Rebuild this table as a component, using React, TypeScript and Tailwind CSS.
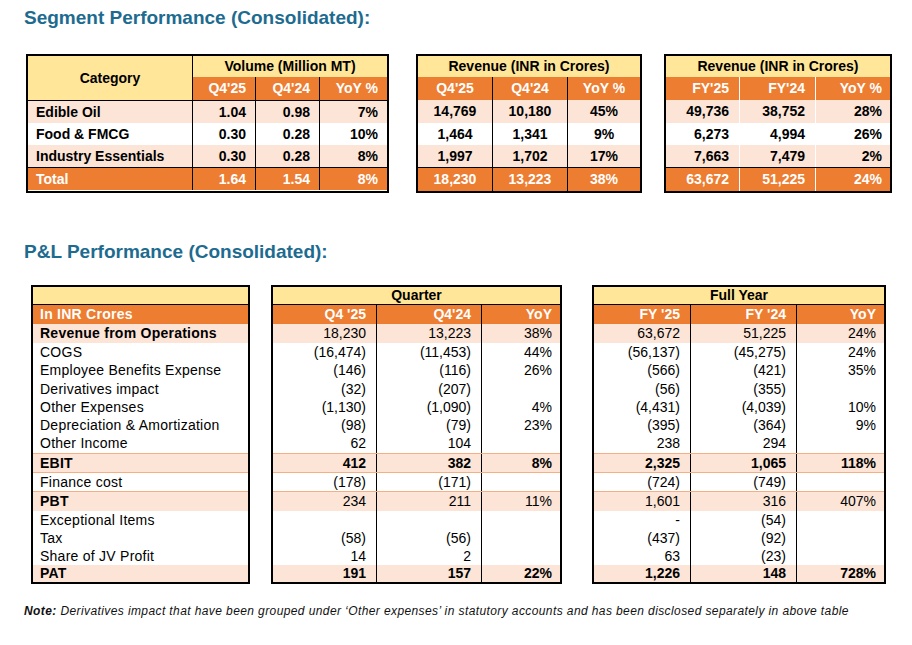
import React from "react";

const YEL = "bg-[#ffe699]";
const ORG = "bg-[#ed7d31]";
const PCH = "bg-[#fce4d6]";

type SegRow = { label: string; a: string[]; b: string[]; c: string[]; bg: string; h: string; h2: string };

const segRows: SegRow[] = [
  { label: "Edible Oil", a: ["1.04", "0.98", "7%"], b: ["14,769", "10,180", "45%"], c: ["49,736", "38,752", "28%"], bg: PCH, h: "h-[23px] border-t border-black", h2: "h-[23px]" },
  { label: "Food & FMCG", a: ["0.30", "0.28", "10%"], b: ["1,464", "1,341", "9%"], c: ["6,273", "4,994", "26%"], bg: "bg-white", h: "h-[22px]", h2: "h-[22px]" },
  { label: "Industry Essentials", a: ["0.30", "0.28", "8%"], b: ["1,997", "1,702", "17%"], c: ["7,663", "7,479", "2%"], bg: PCH, h: "h-[22px]", h2: "h-[22px]" },
];

const total = { a: ["1.64", "1.54", "8%"], b: ["18,230", "13,223", "38%"], c: ["63,672", "51,225", "24%"] };

type PL = { label: string; q: string[]; f: string[]; bg: string; h: string; boldLabel?: boolean; boldVal?: boolean };

const pl: PL[] = [
  { label: "Revenue from Operations", q: ["18,230", "13,223", "38%"], f: ["63,672", "51,225", "24%"], bg: PCH, h: "h-[19px]", boldLabel: true },
  { label: "COGS", q: ["(16,474)", "(11,453)", "44%"], f: ["(56,137)", "(45,275)", "24%"], bg: "bg-white", h: "h-[18px]" },
  { label: "Employee Benefits Expense", q: ["(146)", "(116)", "26%"], f: ["(566)", "(421)", "35%"], bg: "bg-white", h: "h-[19px]" },
  { label: "Derivatives impact", q: ["(32)", "(207)", ""], f: ["(56)", "(355)", ""], bg: "bg-white", h: "h-[18px]" },
  { label: "Other Expenses", q: ["(1,130)", "(1,090)", "4%"], f: ["(4,431)", "(4,039)", "10%"], bg: "bg-white", h: "h-[18px]" },
  { label: "Depreciation & Amortization", q: ["(98)", "(79)", "23%"], f: ["(395)", "(364)", "9%"], bg: "bg-white", h: "h-[18px]" },
  { label: "Other Income", q: ["62", "104", ""], f: ["238", "294", ""], bg: "bg-white", h: "h-[19px]" },
  { label: "EBIT", q: ["412", "382", "8%"], f: ["2,325", "1,065", "118%"], bg: PCH, h: "h-[20px] border-y border-[#f4b084]", boldLabel: true, boldVal: true },
  { label: "Finance cost", q: ["(178)", "(171)", ""], f: ["(724)", "(749)", ""], bg: "bg-white", h: "h-[18px]" },
  { label: "PBT", q: ["234", "211", "11%"], f: ["1,601", "316", "407%"], bg: PCH, h: "h-[20px] border-t border-[#f4b084]", boldLabel: true },
  { label: "Exceptional Items", q: ["", "", ""], f: ["-", "(54)", ""], bg: "bg-white", h: "h-[18px]" },
  { label: "Tax", q: ["(58)", "(56)", ""], f: ["(437)", "(92)", ""], bg: "bg-white", h: "h-[18px]" },
  { label: "Share of JV Profit", q: ["14", "2", ""], f: ["63", "(23)", ""], bg: "bg-white", h: "h-[18px]" },
  { label: "PAT", q: ["191", "157", "22%"], f: ["1,226", "148", "728%"], bg: PCH, h: "h-[17px]", boldLabel: true, boldVal: true },
];

function SegTable1() {
  return (
    <div className="border-2 border-black w-[363px] text-[14px] font-bold">
      <div className="grid grid-cols-[164px_63px_64px_68px] grid-rows-[21px_23px]">
        <div className={`${YEL} row-span-2 flex items-center justify-center`}>Category</div>
        <div className={`${YEL} col-span-3 border-l border-black flex items-center justify-center`}>Volume (Million MT)</div>
        <div className={`${ORG} border-l border-black text-white flex items-center justify-end pr-[9px]`}>Q4'25</div>
        <div className={`${ORG} border-l border-black text-white flex items-center justify-end pr-[9px]`}>Q4'24</div>
        <div className={`${ORG} border-l border-black text-white flex items-center justify-end pr-[9px]`}>YoY %</div>
      </div>
      {segRows.map((r) => (
        <div key={r.label} className={`flex ${r.bg} ${r.h}`}>
          <div className="w-[164px] flex items-center pl-[8px]">{r.label}</div>
          <div className="w-[63px] border-l border-black flex items-center justify-end pr-[9px]">{r.a[0]}</div>
          <div className="w-[64px] border-l border-black flex items-center justify-end pr-[9px]">{r.a[1]}</div>
          <div className="w-[68px] border-l border-black flex items-center justify-end pr-[9px]">{r.a[2]}</div>
        </div>
      ))}
      <div className={`flex ${ORG} h-[23px] border-t border-black text-white`}>
        <div className="w-[164px] flex items-center pl-[8px]">Total</div>
        <div className="w-[63px] border-l border-black flex items-center justify-end pr-[9px]">{total.a[0]}</div>
        <div className="w-[64px] border-l border-black flex items-center justify-end pr-[9px]">{total.a[1]}</div>
        <div className="w-[68px] border-l border-black flex items-center justify-end pr-[9px]">{total.a[2]}</div>
      </div>
    </div>
  );
}

function SegTable2() {
  return (
    <div className="border-2 border-black w-[226px] text-[14px] font-bold">
      <div className={`${YEL} h-[21px] flex items-center justify-center`}>Revenue (INR in Crores)</div>
      <div className={`flex ${ORG} h-[23px] text-white`}>
        <div className="w-[74px] flex items-center justify-center">Q4'25</div>
        <div className="w-[75px] border-l border-black flex items-center justify-center">Q4'24</div>
        <div className="w-[73px] border-l border-black flex items-center justify-center">YoY %</div>
      </div>
      {segRows.map((r) => (
        <div key={r.label} className={`flex ${r.bg} ${r.h2}`}>
          <div className="w-[74px] flex items-center justify-center">{r.b[0]}</div>
          <div className="w-[75px] border-l border-black flex items-center justify-center">{r.b[1]}</div>
          <div className="w-[73px] border-l border-black flex items-center justify-center">{r.b[2]}</div>
        </div>
      ))}
      <div className={`flex ${ORG} h-[24px] border-t border-black text-white`}>
        <div className="w-[74px] flex items-center justify-center">{total.b[0]}</div>
        <div className="w-[75px] border-l border-black flex items-center justify-center">{total.b[1]}</div>
        <div className="w-[73px] border-l border-black flex items-center justify-center">{total.b[2]}</div>
      </div>
    </div>
  );
}

function SegTable3() {
  return (
    <div className="border-2 border-black w-[228px] text-[14px] font-bold">
      <div className={`${YEL} h-[21px] flex items-center justify-center`}>Revenue (INR in Crores)</div>
      <div className={`flex ${ORG} h-[23px] text-white`}>
        <div className="w-[73px] flex items-center justify-end pr-[10px]">FY'25</div>
        <div className="w-[76px] border-l border-white flex items-center justify-end pr-[10px]">FY'24</div>
        <div className="w-[75px] border-l border-white flex items-center justify-end pr-[8px]">YoY %</div>
      </div>
      {segRows.map((r) => (
        <div key={r.label} className={`flex ${r.bg} ${r.h2}`}>
          <div className="w-[73px] flex items-center justify-end pr-[10px]">{r.c[0]}</div>
          <div className="w-[76px] border-l border-white flex items-center justify-end pr-[10px]">{r.c[1]}</div>
          <div className="w-[75px] border-l border-white flex items-center justify-end pr-[8px]">{r.c[2]}</div>
        </div>
      ))}
      <div className={`flex ${ORG} h-[24px] border-t border-black text-white`}>
        <div className="w-[73px] flex items-center justify-end pr-[10px]">{total.c[0]}</div>
        <div className="w-[76px] border-l border-white flex items-center justify-end pr-[10px]">{total.c[1]}</div>
        <div className="w-[75px] border-l border-white flex items-center justify-end pr-[8px]">{total.c[2]}</div>
      </div>
    </div>
  );
}

function PLLabels() {
  return (
    <div className="border-2 border-black w-[219px] text-[14px] tracking-[0.25px]">
      <div className={`${YEL} h-[17px]`}></div>
      <div className={`${ORG} h-[20px] border-t border-black text-white font-bold flex items-center pl-[7px]`}>In INR Crores</div>
      {pl.map((r) => (
        <div key={r.label} className={`${r.bg} ${r.h} flex items-center pl-[7px] ${r.boldLabel ? "font-bold" : ""}`}>{r.label}</div>
      ))}
    </div>
  );
}

function PLValues({ title, heads, widths, pads, pick }: { title: string; heads: string[]; widths: string[]; pads: string[]; pick: (r: PL) => string[] }) {
  return (
    <div className="border-2 border-black text-[14px]">
      <div className={`${YEL} h-[17px] flex items-center justify-center font-bold`}>{title}</div>
      <div className={`flex ${ORG} h-[20px] border-t border-black text-white font-bold`}>
        {heads.map((h, i) => (
          <div key={h} className={`${widths[i]} ${pads[i]} ${i > 0 ? "border-l border-black" : ""} flex items-center justify-end`}>{h}</div>
        ))}
      </div>
      {pl.map((r) => (
        <div key={r.label} className={`flex ${r.bg} ${r.h} ${r.boldVal ? "font-bold" : ""}`}>
          {pick(r).map((v, i) => (
            <div key={i} className={`${widths[i]} ${pads[i]} ${i > 0 ? "border-l border-black" : ""} flex items-center justify-end`}>{v}</div>
          ))}
        </div>
      ))}
    </div>
  );
}

export default function App() {
  return (
    <div className="w-[912px] h-[645px] bg-white text-black font-['Liberation_Sans',Arial,sans-serif] pl-[24px] flex flex-col overflow-hidden">
      <div className="mt-[6px] h-[24px] leading-[24px] text-[19px] font-bold text-[#1d6b8f]">Segment Performance (Consolidated):</div>
      <div className="mt-[24px] ml-[2px] flex">
        <SegTable1 />
        <div className="ml-[27px]"><SegTable2 /></div>
        <div className="ml-[22px]"><SegTable3 /></div>
      </div>
      <div className="mt-[47px] h-[24px] leading-[24px] text-[19px] font-bold text-[#1d6b8f]">P&amp;L Performance (Consolidated):</div>
      <div className="mt-[21px] ml-[7px] flex">
        <PLLabels />
        <div className="ml-[21px]">
          <PLValues
            title="Quarter"
            heads={["Q4 '25", "Q4'24", "YoY"]}
            widths={["w-[103px]", "w-[105px]", "w-[79px]"]}
            pads={["pr-[10px]", "pr-[10px]", "pr-[8px]"]}
            pick={(r) => r.q}
          />
        </div>
        <div className="ml-[30px]">
          <PLValues
            title="Full Year"
            heads={["FY '25", "FY '24", "YoY"]}
            widths={["w-[96px]", "w-[106px]", "w-[88px]"]}
            pads={["pr-[10px]", "pr-[10px]", "pr-[8px]"]}
            pick={(r) => r.f}
          />
        </div>
      </div>
      <div className="mt-[19px] h-[16px] leading-[16px] text-[12px] tracking-[0.4px] italic text-[#111]">
        <span className="font-bold">Note:</span> Derivatives impact that have been grouped under ‘Other expenses’ in statutory accounts and has been disclosed separately in above table
      </div>
    </div>
  );
}
